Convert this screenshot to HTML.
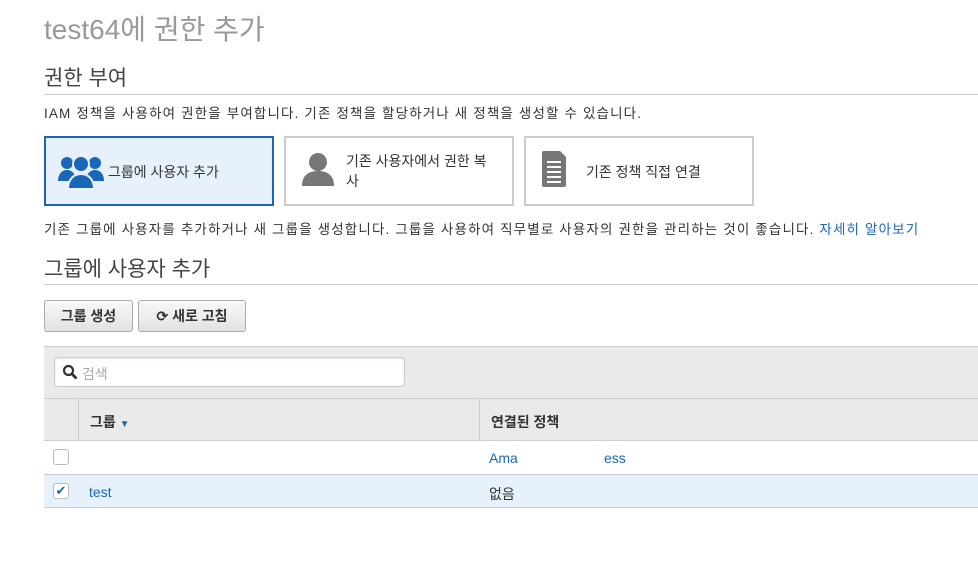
<!DOCTYPE html>
<html><head><meta charset="utf-8"><style>
*{box-sizing:border-box;margin:0;padding:0}
body{width:978px;height:580px;background:#fff;font-family:"Liberation Sans","Noto Sans CJK KR",sans-serif;color:#333;position:relative;overflow:hidden}
.a{position:absolute}
h1{position:absolute;left:44px;top:8px;font-size:28px;font-weight:normal;color:#999}
h2{position:absolute;left:44px;font-size:21px;font-weight:normal;color:#444}
.hr{position:absolute;left:44px;right:0;height:1px;background:#ccc}
.card{position:absolute;top:136px;width:230px;height:70px;border:2px solid #ccc;background:#fff;font-size:14px;color:#333}
.btn{position:absolute;top:300px;height:32px;border:1px solid #aaa;border-radius:3px;background:linear-gradient(#f8f8f8,#e2e2e2);font-size:14px;font-weight:bold;color:#333;line-height:30px;text-align:center}
.cb{position:absolute;left:53px;width:16px;height:16px;border:1px solid #bbb;border-radius:3px;background:#fff}
.p{font-size:13.5px;letter-spacing:1.15px;white-space:nowrap}
</style></head><body>
<h1>test64에 권한 추가</h1>
<h2 style="top:62px">권한 부여</h2>
<div class="hr" style="top:94px"></div>
<div class="a p" style="left:44px;top:102px">IAM 정책을 사용하여 권한을 부여합니다. 기존 정책을 할당하거나 새 정책을 생성할 수 있습니다.</div>
<div class="card" style="left:44px;border-color:#1a66b8;background:#e6f1fc">
<svg class="a" style="left:12px;top:14px" width="46" height="38" viewBox="0 0 46 36"><g fill="#1a66b8"><circle cx="9" cy="10" r="6"/><circle cx="37" cy="10" r="6"/><path d="M0 28c0-7 4-11 9-11s9 4 9 11z"/><path d="M28 28c0-7 4-11 9-11s9 4 9 11z"/><circle cx="23" cy="11" r="8" stroke="#e6f1fc" stroke-width="2"/><path d="M10 36c0-10 6-15 13-15s13 5 13 15z" stroke="#e6f1fc" stroke-width="2"/></g></svg>
<span class="a" style="left:62px;top:24px">그룹에 사용자 추가</span></div>
<div class="card" style="left:284px">
<svg class="a" style="left:16px;top:14px" width="32" height="34" viewBox="0 0 32 34"><g fill="#777"><circle cx="16" cy="10" r="9"/><path d="M0 34c0-11 7-15 16-15s16 4 16 15z"/></g></svg>
<span class="a" style="left:60px;top:13px;width:152px;line-height:20px">기존 사용자에서 권한 복사</span></div>
<div class="card" style="left:524px">
<svg class="a" style="left:16px;top:13px" width="24" height="36" viewBox="0 0 24 36"><path d="M2 0h16l6 6v28a2 2 0 0 1-2 2H2a2 2 0 0 1-2-2V2a2 2 0 0 1 2-2z" fill="#777"/><g fill="#fff"><rect x="5" y="10" width="14" height="2"/><rect x="5" y="15" width="14" height="2"/><rect x="5" y="20" width="14" height="2"/><rect x="5" y="25" width="14" height="2"/><rect x="5" y="30" width="14" height="2"/></g></svg>
<span class="a" style="left:60px;top:24px">기존 정책 직접 연결</span></div>
<div class="a p" style="left:44px;top:218px">기존 그룹에 사용자를 추가하거나 새 그룹을 생성합니다. 그룹을 사용하여 직무별로 사용자의 권한을 관리하는 것이 좋습니다. <span style="color:#1a66b8">자세히 알아보기</span></div>
<h2 style="top:253px">그룹에 사용자 추가</h2>
<div class="hr" style="top:284px"></div>
<div class="btn" style="left:44px;width:89px">그룹 생성</div>
<div class="btn" style="left:138px;width:108px">⟳ 새로 고침</div>
<div class="a" style="left:44px;top:346px;right:0;height:95px;background:#eaeaea;border-top:1px solid #ccc"></div>
<div class="a" style="left:54px;top:357px;width:351px;height:30px;background:#fff;border:1px solid #ccc;border-radius:4px;box-shadow:inset 0 1px 2px rgba(0,0,0,.1)"></div>
<svg class="a" style="left:62px;top:364px" width="16" height="16" viewBox="0 0 16 16"><circle cx="6.5" cy="6.5" r="4.5" fill="none" stroke="#333" stroke-width="2.2"/><path d="M10 10l4.5 4.5" stroke="#333" stroke-width="2.8"/></svg>
<div class="a" style="left:82px;top:364px;font-size:14px;color:#aaa">검색</div>
<div class="a" style="left:44px;top:398px;right:0;height:1px;background:#ccc"></div>
<div class="a" style="left:78px;top:399px;width:1px;height:42px;background:#ccc"></div>
<div class="a" style="left:479px;top:399px;width:1px;height:42px;background:#ccc"></div>
<div class="a" style="left:90px;top:412px;font-size:14px;font-weight:bold">그룹 <span style="color:#1a66b8;font-size:10px">▼</span></div>
<div class="a" style="left:491px;top:412px;font-size:14px;font-weight:bold">연결된 정책</div>
<div class="a" style="left:44px;top:440px;right:0;height:1px;background:#ccc"></div>
<div class="cb" style="top:449px"></div>
<div class="a" style="left:489px;top:450px;font-size:14px;color:#1a66b8">Ama</div>
<div class="a" style="left:604px;top:450px;font-size:14px;color:#1a66b8">ess</div>
<div class="a" style="left:44px;top:474px;right:0;height:34px;background:#e6f1fc;border-top:1px solid #ccc;border-bottom:1px solid #ccc"></div>
<div class="cb" style="top:483px;color:#1a66b8;font-size:13px;line-height:14px;text-align:center">✔</div>
<div class="a" style="left:89px;top:484px;font-size:14px;color:#1a66b8">test</div>
<div class="a" style="left:489px;top:484px;font-size:14px">없음</div>
</body></html>
